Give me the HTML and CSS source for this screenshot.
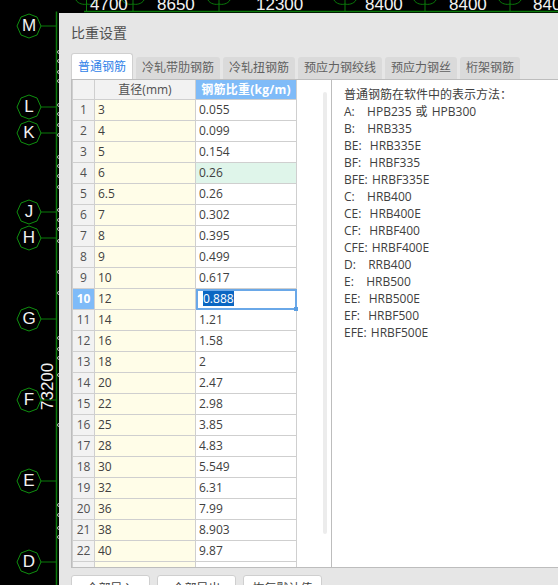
FILE: index.html
```html
<!DOCTYPE html>
<html lang="zh">
<head>
<meta charset="utf-8">
<title>比重设置</title>
<link rel="stylesheet" href="styles.css">
</head>
<body>
<div class="cad">
  <svg class="cad-lines" width="558" height="585" viewBox="0 0 558 585">
    <g fill="none" stroke="#0a7a0a" stroke-width="1">
      <path d="M84 11.5H558M56.5 11.5V585" stroke-width="1.5"/>
      <path d="M86.5 0V12M133 0V12M219 0V12M345 0V12M425 0V12M510 0V12"/>
      <path d="M76 0C78 4 84 5 87 4C90 5 96 4 98 0M122 0C124 4 130 5 133 4C136 5 142 4 144 0M208 0C210 4 216 5 219 4C222 5 228 4 230 0M334 0C336 4 342 5 345 4C348 5 354 4 356 0M414 0C416 4 422 5 425 4C428 5 434 4 436 0M499 0C501 4 507 5 510 4C513 5 519 4 521 0"/>
      <path d="M41 26H57M41 107H57M41 133H57M41 212H57M41 238H57M41 319H57M41 400H57M41 481H57M41 562H57"/>
      <g stroke="#0f8f0f">
        <polygon points="29,14 37,17 41,26 37,35 29,38 21,35 17,26 21,17"/>
        <polygon points="29,95 37,98 41,107 37,116 29,119 21,116 17,107 21,98"/>
        <polygon points="29,121 37,124 41,133 37,142 29,145 21,142 17,133 21,124"/>
        <polygon points="29,200 37,203 41,212 37,221 29,224 21,221 17,212 21,203"/>
        <polygon points="29,226 37,229 41,238 37,247 29,250 21,247 17,238 21,229"/>
        <polygon points="29,307 37,310 41,319 37,328 29,331 21,328 17,319 21,310"/>
        <polygon points="29,388 37,391 41,400 37,409 29,412 21,409 17,400 21,391"/>
        <polygon points="29,469 37,472 41,481 37,490 29,493 21,490 17,481 21,472"/>
        <polygon points="29,550 37,553 41,562 37,571 29,574 21,571 17,562 21,553"/>
      </g>
    </g>
    <g fill="none" stroke="#b8b8b8" stroke-width="1">
      <circle cx="59" cy="52" r="1.5"/><circle cx="59" cy="61" r="1.5"/><circle cx="59" cy="72" r="1.5"/><circle cx="59" cy="81" r="1.5"/>
      <circle cx="59" cy="105" r="1.5"/><circle cx="59" cy="114" r="1.5"/><circle cx="59" cy="125" r="1.5"/><circle cx="59" cy="135" r="1.5"/>
      <circle cx="59" cy="157" r="1.5"/><circle cx="59" cy="166" r="1.5"/><circle cx="59" cy="176" r="1.5"/><circle cx="59" cy="187" r="1.5"/>
      <circle cx="59" cy="210" r="1.5"/><circle cx="59" cy="220" r="1.5"/><circle cx="59" cy="229" r="1.5"/><circle cx="59" cy="241" r="1.5"/>
      <circle cx="59" cy="272" r="1.5"/><circle cx="59" cy="293" r="1.5"/><circle cx="59" cy="338" r="1.5"/><circle cx="59" cy="349" r="1.5"/>
      <circle cx="59" cy="358" r="1.5"/><circle cx="59" cy="375" r="1.5"/><circle cx="59" cy="425" r="1.5"/>
      <circle cx="59" cy="505" r="1.5"/><circle cx="59" cy="515" r="1.5"/><circle cx="59" cy="528" r="1.5"/><circle cx="59" cy="537" r="1.5"/>
    </g>
  </svg>
  <span class="dim d1">4700</span>
  <span class="dim d2">8650</span>
  <span class="dim d3">12300</span>
  <span class="dim d4">8400</span>
  <span class="dim d5">8400</span>
  <span class="dim d6">8400</span>
  <span class="axis a-m">M</span>
  <span class="axis a-l">L</span>
  <span class="axis a-k">K</span>
  <span class="axis a-j">J</span>
  <span class="axis a-h">H</span>
  <span class="axis a-g">G</span>
  <span class="axis a-f">F</span>
  <span class="axis a-e">E</span>
  <span class="axis a-d">D</span>
  <span class="dim-v">73200</span>
</div>
<main class="dialog">
  <h1 class="title">比重设置</h1>
  <div class="tabs">
    <div class="tab active">普通钢筋</div>
    <div class="tab">冷轧带肋钢筋</div>
    <div class="tab">冷轧扭钢筋</div>
    <div class="tab">预应力钢绞线</div>
    <div class="tab">预应力钢丝</div>
    <div class="tab">桁架钢筋</div>
  </div>
  <div class="panel">
    <div class="grid-wrap">
      <div class="grid">
        <div class="corner"></div><div class="hcell">直径(mm)</div><div class="hcell sel">钢筋比重(kg/m)</div>
        <div class="rh">1</div><div class="c1">3</div><div class="c2">0.055</div>
        <div class="rh">2</div><div class="c1">4</div><div class="c2">0.099</div>
        <div class="rh">3</div><div class="c1">5</div><div class="c2">0.154</div>
        <div class="rh">4</div><div class="c1">6</div><div class="c2 mint">0.26</div>
        <div class="rh">5</div><div class="c1">6.5</div><div class="c2">0.26</div>
        <div class="rh">6</div><div class="c1">7</div><div class="c2">0.302</div>
        <div class="rh">7</div><div class="c1">8</div><div class="c2">0.395</div>
        <div class="rh">8</div><div class="c1">9</div><div class="c2">0.499</div>
        <div class="rh">9</div><div class="c1">10</div><div class="c2">0.617</div>
        <div class="rh rsel">10</div><div class="c1">12</div><div class="c2 edit"><span class="selected">0.888</span><i class="handle"></i></div>
        <div class="rh">11</div><div class="c1">14</div><div class="c2">1.21</div>
        <div class="rh">12</div><div class="c1">16</div><div class="c2">1.58</div>
        <div class="rh">13</div><div class="c1">18</div><div class="c2">2</div>
        <div class="rh">14</div><div class="c1">20</div><div class="c2">2.47</div>
        <div class="rh">15</div><div class="c1">22</div><div class="c2">2.98</div>
        <div class="rh">16</div><div class="c1">25</div><div class="c2">3.85</div>
        <div class="rh">17</div><div class="c1">28</div><div class="c2">4.83</div>
        <div class="rh">18</div><div class="c1">30</div><div class="c2">5.549</div>
        <div class="rh">19</div><div class="c1">32</div><div class="c2">6.31</div>
        <div class="rh">20</div><div class="c1">36</div><div class="c2">7.99</div>
        <div class="rh">21</div><div class="c1">38</div><div class="c2">8.903</div>
        <div class="rh">22</div><div class="c1">40</div><div class="c2">9.87</div>
        <div class="rh"></div><div class="c1"></div><div class="c2"></div>
      </div>
      <div class="scrollbar"></div>
    </div>
    <div class="notes">
      <p>普通钢筋在软件中的表示方法：</p>
      <p>A:&nbsp;&nbsp;&nbsp;HPB235 或 HPB300</p>
      <p>B:&nbsp;&nbsp;&nbsp;HRB335</p>
      <p>BE:&nbsp;&nbsp;HRB335E</p>
      <p>BF:&nbsp;&nbsp;HRBF335</p>
      <p>BFE: HRBF335E</p>
      <p>C:&nbsp;&nbsp;&nbsp;HRB400</p>
      <p>CE:&nbsp;&nbsp;HRB400E</p>
      <p>CF:&nbsp;&nbsp;HRBF400</p>
      <p>CFE: HRBF400E</p>
      <p>D:&nbsp;&nbsp;&nbsp;RRB400</p>
      <p>E:&nbsp;&nbsp;&nbsp;HRB500</p>
      <p>EE:&nbsp;&nbsp;HRB500E</p>
      <p>EF:&nbsp;&nbsp;HRBF500</p>
      <p>EFE: HRBF500E</p>
    </div>
  </div>
  <div class="actions">
    <button class="btn">全部导入</button>
    <button class="btn">全部导出</button>
    <button class="btn">恢复默认值</button>
  </div>
</main>
</body>
</html>
```
FILE: styles.css
```css
* { box-sizing: border-box; }
html, body { margin: 0; padding: 0; }
body {
  width: 558px;
  height: 585px;
  overflow: hidden;
  background: #000;
  position: relative;
  font-family: "Open Sans", "Noto Sans CJK SC", sans-serif;
  color: #404040;
}
.cad { position: absolute; inset: 0; }
.cad-lines { position: absolute; left: 0; top: 0; }
.dim, .axis, .dim-v {
  position: absolute;
  color: #f2f2f2;
  font-family: "Liberation Sans", sans-serif;
}
.dim { top: -5px; font-size: 17px; line-height: 20px; }
.d1 { left: 90px; }
.d2 { left: 157px; }
.d3 { left: 256px; }
.d4 { left: 365px; }
.d5 { left: 449px; }
.d6 { left: 533px; }
.axis { left: 17px; width: 24px; text-align: center; font-size: 17px; line-height: 24px; }
.a-m { top: 14px; }
.a-l { top: 95px; }
.a-k { top: 121px; }
.a-j { top: 200px; }
.a-h { top: 226px; }
.a-g { top: 307px; }
.a-f { top: 388px; }
.a-e { top: 469px; }
.a-d { top: 550px; }
.dim-v {
  left: 29px; top: 381px; width: 38px; height: 20px;
  font-size: 17px; line-height: 20px; text-align: center;
  white-space: nowrap;
  transform: rotate(-90deg);
}
.dialog {
  position: absolute;
  left: 59px; top: 13px;
  width: 499px; height: 572px;
  background: #e6e6e6;
  padding: 0 0 0 12px;
  overflow: hidden;
}
.title {
  margin: 0;
  height: 40px;
  font-weight: 400;
  font-size: 14px;
  line-height: 40px;
  color: #505050;
}
.tabs { display: flex; gap: 3px; height: 26px; }
.tab {
  height: 22px;
  margin-top: 4px;
  padding: 0 6px;
  background: #dadada;
  border-radius: 3px 3px 0 0;
  font-size: 12px;
  line-height: 22px;
  color: #606060;
}
.tab.active {
  margin-top: 0;
  height: 26px;
  background: #fff;
  color: #2f7fe8;
  line-height: 25px;
  padding: 0 6px;
  border: 1px solid #d0d0d0;
  border-bottom: 0;
}
.panel {
  height: 489px;
  display: flex;
  background: #fff;
  border: 1px solid #bdbdbd;
  border-right: 0;
  overflow: hidden;
}
.grid-wrap {
  width: 260px;
  flex: none;
  display: flex;
  border-right: 1px solid #bdbdbd;
  overflow: hidden;
}
.grid {
  width: 225px;
  flex: none;
  display: grid;
  grid-template-columns: 22px 101px 101px;
  grid-template-rows: 20px repeat(23, 21px);
  align-content: start;
  font-size: 12px;
  border-left: 1px solid #cfcfcf;
}
.grid > div { border-right: 1px solid #cfcfcf; border-bottom: 1px solid #cfcfcf; line-height: 20px; white-space: nowrap; }
.corner, .rh { background: #f2f2f2; }
.hcell { background: #f2f2f2; text-align: center; font-size: 12px; line-height: 19px !important; color: #505050; }
.hcell.sel { background: #7fbbf8; color: #fff; font-weight: 700; letter-spacing: 0.25px; }
.rh { text-align: center; font-size: 12px; color: #505050; }
.rsel { background: #7fbbf8; color: #fff; font-weight: 700; }
.c1 { background: #fffde8; padding-left: 3px; }
.c2 { background: #fff; padding-left: 3px; }
.mint { background: #dff5ea; }
.edit { position: relative; border: 1px solid #6aa8e8 !important; padding-left: 6px; outline: 1px solid #6aa8e8; outline-offset: -2px; line-height: 18px !important; }
.selected { background: #0a66c2; color: #fff; display: inline-block; line-height: 15px; }
.handle { position: absolute; right: -2px; bottom: -2px; width: 4px; height: 4px; background: #5b9fe3; }
.scrollbar {
  width: 4px;
  height: 442px;
  margin: 12px 0 0 26px;
  flex: none;
  background: #ececec;
  border-radius: 2px;
}
.notes { flex: 1; padding: 6px 0 0 12px; font-size: 12px; line-height: 17px; word-spacing: 1px; }
.notes p { margin: 0; white-space: nowrap; }
.actions { display: flex; gap: 7px; margin-top: 7px; }
.btn {
  width: 79px;
  height: 26px;
  flex: none;
  background: #fff;
  border: 1px solid #cfcfcf;
  border-radius: 3px;
  font: 12px "Open Sans", "Noto Sans CJK SC", sans-serif;
  color: #404040;
  padding: 0;
}
```
